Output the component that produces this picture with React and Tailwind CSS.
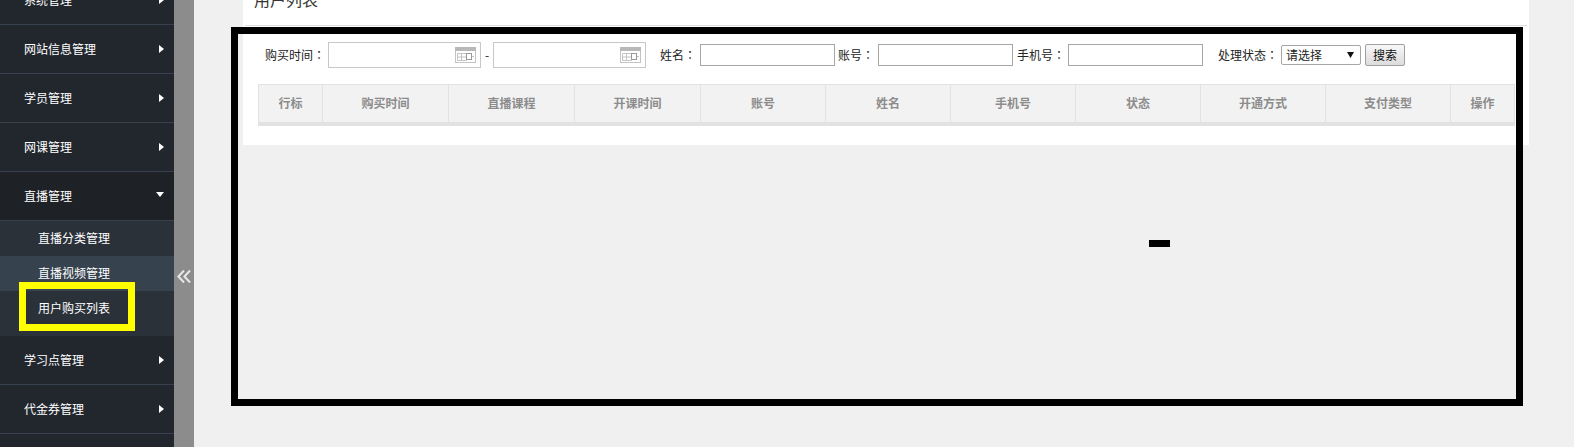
import React from "react";

const CJK = "font-['Noto_Sans_CJK_SC','Liberation_Sans',sans-serif]";

function Arrow({ down }) {
  return down ? (
    <svg width="8" height="5" viewBox="0 0 8 5" className="shrink-0"><path d="M0 0H8L4 5Z" fill="#fff" /></svg>
  ) : (
    <svg width="5" height="8" viewBox="0 0 5 8" className="shrink-0"><path d="M0 0L5 4L0 8Z" fill="#fff" /></svg>
  );
}

function NavRow({ label, open }) {
  return (
    <div className={`flex items-center justify-between pl-6 pr-[10px] h-[49px] border-b border-[#38424e] text-xs text-white shrink-0 ${open ? "bg-[#1e2125]" : ""}`}>
      <span>{label}</span>
      <span className={`flex ${open ? "-translate-y-[2px]" : ""}`}><Arrow down={open} /></span>
    </div>
  );
}

function SubRow({ label, active }) {
  return (
    <div className={`flex items-center h-[35px] pl-[38px] pb-[2px] text-xs text-white ${active ? "bg-[#36424e]" : ""}`}>{label}</div>
  );
}

function CalendarIcon() {
  return (
    <svg width="21" height="16" viewBox="0 0 21 16" className="absolute right-[4px] top-[4px]">
      <rect x="0.5" y="0.5" width="20" height="15" fill="#fff" stroke="#c4c4c4" />
      <rect x="0" y="0" width="21" height="4" fill="#b8b8b8" />
      <path d="M2.5 6.5H11.5V13.5H2.5ZM6.5 6.5V13.5M2.5 10H11.5" fill="none" stroke="#c4c4c4" />
      <rect x="11.5" y="6.5" width="5" height="6" fill="#fff" stroke="#9a9a9a" />
      <path d="M17 9.5H19" stroke="#c4c4c4" />
    </svg>
  );
}

function DateInput() {
  return (
    <div className="relative w-[153px] h-[26px] border border-[#c8c8c8] bg-white shrink-0">
      <input className="w-full h-full outline-none" aria-label="date" />
      <CalendarIcon />
    </div>
  );
}

function TextInput() {
  return <input className="w-[135px] h-[22px] border border-[#a6a6a6] bg-white outline-none shrink-0" />;
}

function Label({ text, className }) {
  return (
    <span className={`shrink-0 ${className}`}>
      {text}
      <span className="font-['Noto_Sans_CJK_TC',sans-serif]">：</span>
    </span>
  );
}

const cols = [
  ["行标", "w-[64px]"],
  ["购买时间", "w-[126px]"],
  ["直播课程", "w-[126px]"],
  ["开课时间", "w-[126px]"],
  ["账号", "w-[125px]"],
  ["姓名", "w-[125px]"],
  ["手机号", "w-[125px]"],
  ["状态", "w-[125px]"],
  ["开通方式", "w-[125px]"],
  ["支付类型", "w-[125px]"],
  ["操作", "w-[64px]"],
];

export default function App() {
  return (
    <div className={`relative flex w-full h-[447px] overflow-hidden bg-[#f0f0f0] ${CJK}`}>
      <aside className="w-[174px] shrink-0 bg-[#22272e] flex flex-col">
        <div className="flex flex-col -mt-[24px]">
          <NavRow label="系统管理" />
          <NavRow label="网站信息管理" />
          <NavRow label="学员管理" />
          <NavRow label="网课管理" />
          <NavRow label="直播管理" open />
          <div className="bg-[#2a3139] h-[115px] shrink-0">
            <SubRow label="直播分类管理" />
            <SubRow label="直播视频管理" active />
            <SubRow label="用户购买列表" />
          </div>
          <NavRow label="学习点管理" />
          <NavRow label="代金券管理" />
        </div>
      </aside>
      <div className="w-[20px] shrink-0 bg-[#8c8c8c] flex items-start justify-center pt-[270px]">
        <svg width="14" height="13" viewBox="0 0 14 13" fill="none" stroke="#e8e8e8" strokeWidth="2">
          <path d="M7 0.5L1.4 6.5L7 12.5M13 0.5L7.4 6.5L13 12.5" />
        </svg>
      </div>
      <main className="flex-1 min-w-0 pl-[49px] pr-[45px]">
        <div className="bg-white h-[145px]">
          <div className="h-[26px] mx-[2px] border-b border-[#dddddd] overflow-hidden">
            <div className="-mt-[13px] pl-[9px] text-base leading-[24px] text-[#333333]">用户列表</div>
          </div>
          <div className="flex items-center h-[42px] mt-[8px] pl-[22px] text-xs text-[#222222] whitespace-nowrap">
            <Label text="购买时间" className="w-[63px]" />
            <DateInput />
            <span className="w-[12px] text-center shrink-0">-</span>
            <DateInput />
            <Label text="姓名" className="ml-[14px] w-[40px]" />
            <TextInput />
            <Label text="账号" className="ml-[3px] w-[40px]" />
            <TextInput />
            <Label text="手机号" className="ml-[4px] w-[51px]" />
            <TextInput />
            <Label text="处理状态" className="ml-[15px] w-[63px]" />
            <div className="relative w-[80px] h-[20px] border border-[#a6a6a6] rounded-[2px] bg-white shrink-0 flex items-center pl-[4px] text-[#222222]">
              <span>请选择</span>
              <svg width="7" height="6" viewBox="0 0 7 6" className="absolute right-[6px] top-[6px]"><path d="M0 0H7L3.5 6Z" fill="#111" /></svg>
            </div>
            <button className="ml-[4px] w-[40px] h-[22px] border border-[#a0a0a0] rounded-[2px] bg-gradient-to-b from-[#f8f8f8] to-[#dcdcdc] text-xs text-[#111111] shrink-0">搜索</button>
          </div>
          <div className="mt-[8px] mx-[15px]">
            <table className="w-[1256px] table-fixed border-collapse border-b-[4px] border-[#e2e2e2]">
              <thead>
                <tr>
                  {cols.map(([t, w]) => (
                    <th key={t} className={`${w} h-[39px] p-0 bg-[#f2f2f2] border border-[#e2e2e2] text-xs font-bold text-[#8c8c8c] text-center`}>{t}</th>
                  ))}
                </tr>
              </thead>
            </table>
          </div>
        </div>
      </main>
      <div className="absolute left-[231px] top-[27px] w-[1292px] h-[379px] border-[7px] border-black pointer-events-none" />
      <div className="absolute left-[19px] top-[282px] w-[116px] h-[49px] border-[7px] border-[#ffff00] pointer-events-none" />
      <div className="absolute left-[1149px] top-[240px] w-[21px] h-[7px] bg-black" />
    </div>
  );
}
